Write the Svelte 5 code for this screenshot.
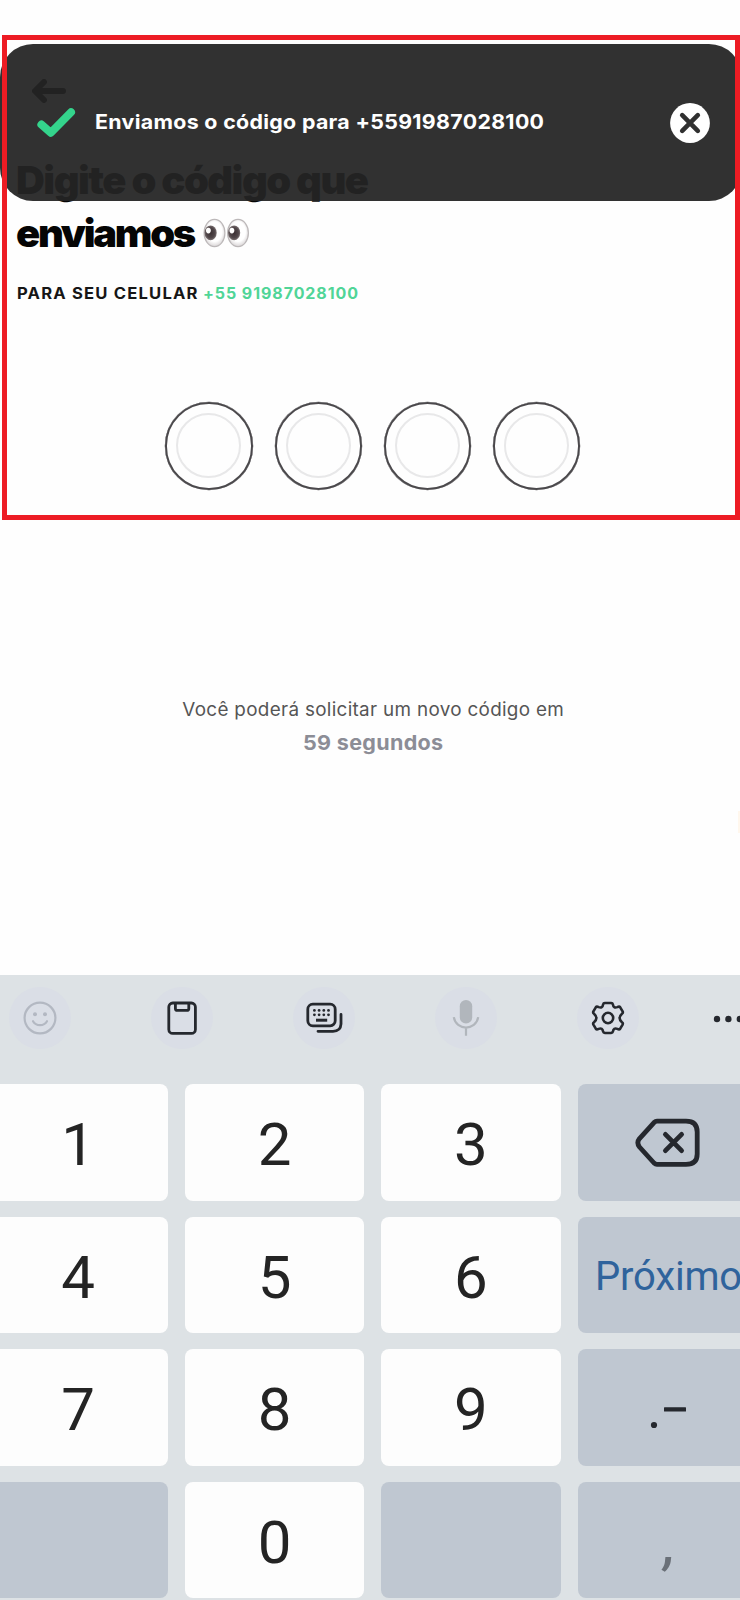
<script>
  const slots = [0, 1, 2, 3];
  const keys = [
    { t: '1' }, { t: '2' }, { t: '3' }, { kind: 'back' },
    { t: '4' }, { t: '5' }, { t: '6' }, { t: 'Próximo', kind: 'next' },
    { t: '7' }, { t: '8' }, { t: '9' }, { kind: 'dash' },
    { kind: 'blank' }, { t: '0' }, { kind: 'blank' }, { kind: 'comma', t: ',' }
  ];
  const gearPath = 'M-3.2 -15H3.2Q4.6 -15 4.9 -13.6Q5.4 -9.4 9.4 -10.9Q11.3 -12 12.2 -10.7L14.6 -6.6Q15.3 -5.2 14 -4.3Q9.2 0 14 4.3Q15.3 5.2 14.6 6.6L12.2 10.7Q11.3 12 9.4 10.9Q5.4 9.4 4.9 13.6Q4.6 15 3.2 15H-3.2Q-4.6 15 -4.9 13.6Q-5.4 9.4 -9.4 10.9Q-11.3 12 -12.2 10.7L-14.6 6.6Q-15.3 5.2 -14 4.3Q-9.2 0 -14 -4.3Q-15.3 -5.2 -14.6 -6.6L-12.2 -10.7Q-11.3 -12 -9.4 -10.9Q-5.4 -9.4 -4.9 -13.6Q-4.6 -15 -3.2 -15Z';
</script>

<div class="screen">
  <main>
    <header>
      <svg class="arrow" width="34" height="24" viewBox="0 0 34 24"><path d="M31 12H4M12 3L3 12L12 21" /></svg>
    </header>
    <h1>
      <span class="l1">Digite o código que</span>
      <span class="l2"><span class="word">enviamos</span>
        <svg class="eyes" width="47" height="30" viewBox="0 0 47 30">
          <defs>
            <radialGradient id="white" cx=".5" cy=".45" r=".55">
              <stop offset=".65" stop-color="#fff" /><stop offset="1" stop-color="#d9d5d6" />
            </radialGradient>
            <radialGradient id="iris" cx=".5" cy=".5" r=".5">
              <stop offset="0" stop-color="#3b3033" /><stop offset=".7" stop-color="#51474a" /><stop offset="1" stop-color="#7a7071" />
            </radialGradient>
          </defs>
          {#each [0, 23.5] as x}
            <g transform="translate({x} 0)">
              <ellipse cx="11.5" cy="15" rx="10.4" ry="13.6" fill="url(#white)" stroke="#bcb8b9" stroke-width="1.2" />
              <ellipse cx="7.6" cy="14.8" rx="6.1" ry="7.4" fill="url(#iris)" />
              <ellipse cx="5.4" cy="12.6" rx="2.4" ry="2.8" fill="#fff" />
            </g>
          {/each}
        </svg>
      </span>
    </h1>
    <p class="target"><span class="lbl">PARA SEU CELULAR</span><span class="num">+55 91987028100</span></p>
    <div class="code">
      {#each slots as s (s)}<div class="slot"><i></i></div>{/each}
    </div>
    <div class="resend">
      <p class="wait">Você poderá solicitar um novo código em</p>
      <p class="time">59 segundos</p>
    </div>
    <span class="glow"></span>
  </main>

  <section class="keyboard">
    <nav>
      <button aria-label="emoji">
        <svg width="36" height="36" viewBox="-18 -18 36 36" fill="none" stroke="#b3b8c2" stroke-width="2.2" stroke-linecap="round">
          <circle r="15.4" /><path d="M-7 3.2C-4 8.4 4 8.4 7 3.2" />
          <circle cx="-5" cy="-3.8" r="2" fill="#b3b8c2" stroke="none" /><circle cx="5" cy="-3.8" r="2" fill="#b3b8c2" stroke="none" />
        </svg>
      </button>
      <button aria-label="clipboard">
        <svg width="36" height="36" viewBox="-18 -18 36 36" fill="none" stroke="#25282e" stroke-width="2.8" stroke-linejoin="round">
          <rect x="-13.2" y="-15" width="26.6" height="30.4" rx="4" />
          <path d="M-6.6 -15V-9.6Q-6.6 -7.6 -4.6 -7.6H4.8Q6.8 -7.6 6.8 -9.6V-15" />
        </svg>
      </button>
      <button aria-label="keyboards">
        <svg width="40" height="36" viewBox="-20 -18 40 36" fill="none" stroke="#25282e" stroke-width="2.8" stroke-linecap="round">
          <rect x="-16.2" y="-13.8" width="27.4" height="21.6" rx="5" />
          <path d="M17 -3.5V6Q16.6 13.3 9 13.3H-6" />
          <path d="M-8 2.2H3.2" stroke-linecap="butt" stroke-width="3" />
          {#each [-9.6, -4.9, -.2, 4.5] as x}
            <circle cx={x} cy="-7.6" r="1.4" fill="#25282e" stroke="none" /><circle cx={x} cy="-3.2" r="1.4" fill="#25282e" stroke="none" />
          {/each}
        </svg>
      </button>
      <button aria-label="voice">
        <svg width="36" height="40" viewBox="-18 -20 36 40" fill="none" stroke="#b1b6bc" stroke-width="2.2">
          <rect x="-6.2" y="-18" width="12.4" height="23.6" rx="6.2" fill="#b1b6bc" stroke="none" />
          <path d="M-12.2 -.8C-10 13 10 13 12.2 -.8M0 9.6V17.8" />
        </svg>
      </button>
      <button aria-label="settings">
        <svg width="36" height="36" viewBox="-18 -18 36 36" fill="none" stroke="#25282e" stroke-width="2.6" stroke-linejoin="round">
          <path d={gearPath} /><circle r="5.2" />
        </svg>
      </button>
      <button aria-label="more" class="more">
        <svg width="36" height="10" viewBox="0 0 36 10" fill="#25282e"><circle cx="5" cy="5" r="3.2" /><circle cx="16.4" cy="5" r="3.2" /><circle cx="27.8" cy="5" r="3.2" /></svg>
      </button>
    </nav>
    <div class="keys">
      {#each keys as k}
        <div class="key {k.kind ?? 'digit'}">
          {#if k.kind === 'back'}
            <svg width="66" height="50" viewBox="0 0 66 50" fill="none" stroke="#25282e" stroke-width="4.8" stroke-linecap="round" stroke-linejoin="round">
              <path d="M22 3.2H51Q62.2 3.2 62.2 14V36Q62.2 46.4 51 46.4H22Q20.5 46.4 19 45L4.5 29Q1.2 24.8 4.5 20.6L19 4.6Q20.5 3.2 22 3.2Z" />
              <path d="M30.4 16.4L46.6 32.6M46.6 16.4L30.4 32.6" />
            </svg>
          {:else if k.kind === 'dash'}
            <svg width="38" height="24" viewBox="0 0 38 24" fill="#25282e"><circle cx="4" cy="20" r="3.1" /><rect x="14" y="2.2" width="22" height="4.4" rx=".5" /></svg>
          {:else if k.t}
            <span>{k.t}</span>
          {/if}
        </div>
      {/each}
    </div>
  </section>

  <div class="toast">
    <svg width="40" height="32" viewBox="0 0 40 32" fill="none" stroke="#34d48c" stroke-width="8" stroke-linecap="round" stroke-linejoin="round"><path d="M5.4 18.6L14.8 26.8L35 6.2" /></svg>
    <span>Enviamos o código para +5591987028100</span>
    <svg class="close" width="40" height="40" viewBox="-20 -20 40 40"><circle r="19.9" fill="#fff" /><path d="M-7.8 -7.8L7.8 7.8M7.8 -7.8L-7.8 7.8" stroke="#303030" stroke-width="4.6" stroke-linecap="round" /></svg>
  </div>
  <div class="frame"></div>
</div>

<style>
  :global(body) { margin: 0; background: #fff; }
  .screen { position: relative; width: 740px; height: 1600px; overflow: hidden; background: #fefefe; font-family: Inter, "Liberation Sans", sans-serif; }
  main { position: relative; height: 975px; }
  header { height: 153px; box-sizing: border-box; padding: 79px 0 0 32px; }
  .arrow { display: block; fill: none; stroke: #000; stroke-width: 6; stroke-linecap: round; stroke-linejoin: round; }
  h1, p { margin: 0; white-space: nowrap; }
  h1 { padding-left: 15.5px; font-size: 39px; line-height: 53px; font-weight: 900; color: #050505; }
  h1 > span { display: flex; height: 53px; align-items: center; }
  .l1 { letter-spacing: -1.5px; transform: scaleX(1.025); transform-origin: 0 50%; }
  .word { width: 178px; letter-spacing: -2.2px; transform: scaleX(1.022); transform-origin: 0 50%; }
  .eyes { margin: 0 0 0 9px; }
  .target { display: flex; padding: 25px 0 0 17px; margin-bottom: -1px; font-size: 15.3px; line-height: 20px; font-weight: 700; color: #161616; }
  .target span { transform-origin: 0 50%; }
  .lbl { width: 186px; letter-spacing: 1.1px; transform: scaleX(1.085); }
  .num { color: #50d597; letter-spacing: .9px; transform: scaleX(1.045); }
  .code { display: flex; justify-content: center; gap: 22px; padding: 99.4px 0 0 5.4px; }
  .slot { box-sizing: border-box; width: 87.2px; height: 87.2px; border: 2.5px solid #4b494c; border-radius: 50%; display: grid; place-items: center; box-shadow: 0 0 0 .2px #4b494c; }
  .slot i { box-sizing: border-box; width: 65px; height: 65px; border: 2.5px solid #e8e8e9; border-radius: 50%; }
  .resend { padding-top: 203px; padding-left: 5.5px; text-align: center; }
  .wait { font-size: 18.5px; line-height: 33px; color: #555; letter-spacing: .3px; transform: scaleX(1.02); }
  .time { font-size: 20.5px; line-height: 34px; font-weight: 700; color: #8c8d96; letter-spacing: .3px; transform: scaleX(1.05); }
  .glow { position: absolute; right: 0; top: 811px; width: 2px; height: 22px; background: #fff7ed; }
  .keyboard { height: 625px; background: #dde2e5; }
  nav { display: flex; gap: 80px; height: 109px; box-sizing: border-box; padding: 12px 0 0 9px; }
  button { flex: none; width: 62px; height: 62px; border: 0; padding: 0; border-radius: 50%; background: #dadee6; display: grid; place-items: center; }
  .more { background: none; justify-items: start; padding-top: 2px; margin-left: -7px; }
  .keys { display: grid; margin-left: -11.6px; grid-template-columns: repeat(4, 179.6px); grid-auto-rows: 116.6px; gap: 16px 16.8px; }
  .key { display: flex; align-items: center; justify-content: center; border-radius: 8px; background: #fdfdfd; font-family: Roboto, sans-serif; color: #242424; }
  .digit { font-size: 60px; line-height: 70px; }
  .digit span { padding-top: 6px; }
  .back, .next, .dash, .blank, .comma { background: #bfc7d1; }
  .back svg { margin: 1px 0 0 1px; }
  .next { justify-content: flex-start; padding: 4px 0 0 17.5px; box-sizing: border-box; font-size: 40px; letter-spacing: -.2px; color: #2f639c; }
  .dash { padding: 19px 0 0 3px; box-sizing: border-box; }
  .comma { font-size: 52px; font-weight: 600; color: #6a7078; padding: 10px 0 0 4px; box-sizing: border-box; }
  .comma span { transform: skewX(-6deg); }
  .toast { position: absolute; left: 0; top: 43.5px; width: 742px; height: 157px; box-sizing: border-box; display: flex; align-items: center; padding: 0 32px 0 36px; border-radius: 33px; background: rgba(36, 36, 36, .94); color: #fff; }
  .toast span { flex: 1; margin: -2px 0 0 19px; font-size: 20.3px; font-weight: 700; white-space: nowrap; letter-spacing: .3px; transform: scaleX(1.053); transform-origin: 0 50%; }
  .toast .close { position: relative; top: .5px; }
  .frame { position: absolute; left: 2px; top: 35px; width: 738px; height: 485px; box-sizing: border-box; border: 5px solid #ed1c24; }
</style>
